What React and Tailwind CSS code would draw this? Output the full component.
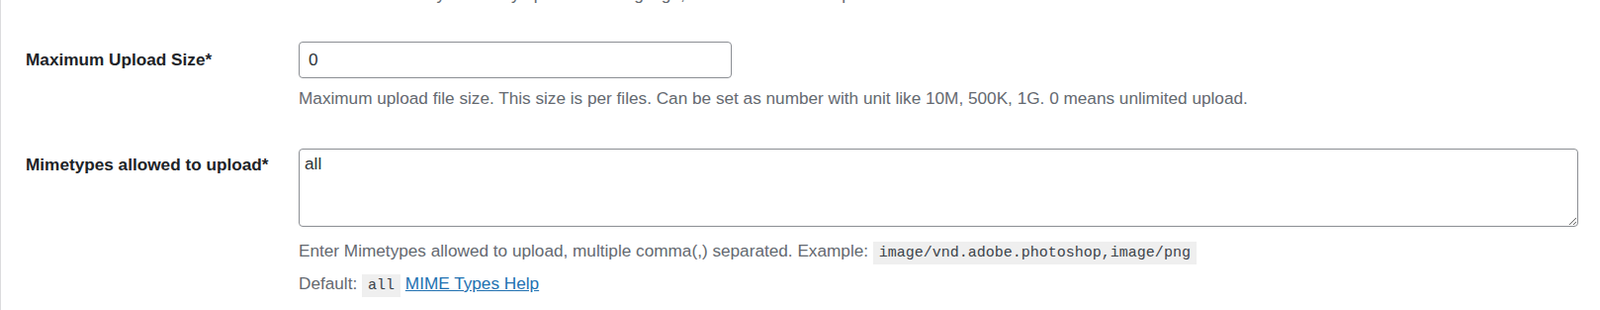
import { useState } from "react";

const SettingsUploadRows = () => {
  const [maxSize, setMaxSize] = useState("0");
  const [mimes, setMimes] = useState("all");

  return (
    <div className="min-h-screen bg-white border-l border-[#dcdcde] text-[17.2px] text-[#1d2327] font-['Liberation_Sans',Arial,sans-serif] overflow-hidden">
      {/* Tail of the previous row's description */}
      <div className="h-[42px] overflow-hidden">
        <p className="ml-[301px] -mt-[18px] leading-[24px] text-[#646970] whitespace-nowrap">
          Number of files any user may upload in a single go, 0 means unlimited upload.
        </p>
      </div>

      {/* Maximum upload size */}
      <div className="flex">
        <div className="w-[301px] shrink-0 pl-[25px] pt-[6px]">
          <label htmlFor="max_upload_size" className="font-bold leading-[24px]">
            Maximum Upload Size*
          </label>
        </div>
        <div className="flex-1 pr-[22px]">
          <input
            id="max_upload_size"
            type="text"
            value={maxSize}
            onChange={(e) => setMaxSize(e.target.value)}
            className="block w-[438px] h-[37px] px-[9px] border border-[#8c8f94] rounded-[4px] text-[#2c3338] bg-white focus:outline-none"
          />
          <p className="mt-[8px] leading-[24px] text-[#646970]">
            Maximum upload file size. This size is per files. Can be set as number with unit like 10M, 500K, 1G. 0 means unlimited upload.
          </p>
        </div>
      </div>

      {/* Mimetypes */}
      <div className="flex mt-[39px]">
        <div className="w-[301px] shrink-0 pl-[25px] pt-[4px]">
          <label htmlFor="allowed_mimes" className="font-bold leading-[24px]">
            Mimetypes allowed to upload*
          </label>
        </div>
        <div className="flex-1 pr-[22px]">
          <textarea
            id="allowed_mimes"
            value={mimes}
            onChange={(e) => setMimes(e.target.value)}
            className="block w-full h-[79px] px-[5px] pt-[2px] leading-[24px] border border-[#8c8f94] rounded-[4px] text-[#2c3338] bg-white focus:outline-none"
          />
          <p className="mt-[12px] leading-[24px] text-[#646970]">
            Enter Mimetypes allowed to upload, multiple comma(,) separated. Example:{" "}
            <code className="inline-block px-[6px] leading-[23px] bg-[#efefef] text-[#3c434a] text-[15px] font-['Liberation_Mono',monospace]">
              image/vnd.adobe.photoshop,image/png
            </code>
          </p>
          <p className="mt-[7px] leading-[24px] text-[#646970]">
            Default:{" "}
            <code className="inline-block px-[6px] leading-[23px] bg-[#efefef] text-[#3c434a] text-[15px] font-['Liberation_Mono',monospace]">
              all
            </code>{" "}
            <a href="#mime-help" className="text-[#2271b1] underline">
              MIME Types Help
            </a>
          </p>
        </div>
      </div>
    </div>
  );
};

export default SettingsUploadRows;
